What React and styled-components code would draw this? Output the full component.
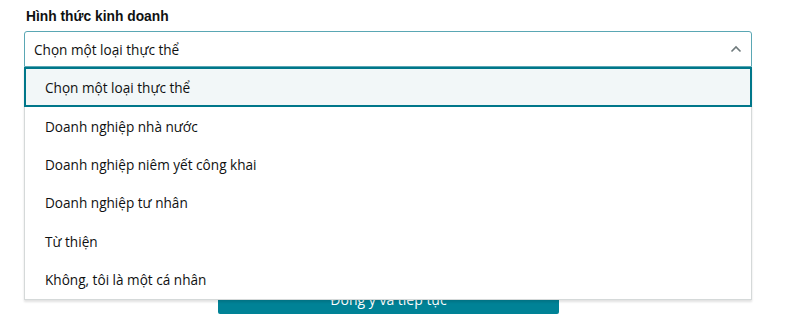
import React from "react";
import styled, { createGlobalStyle } from "styled-components";

const Global = createGlobalStyle`
  html, body { margin: 0; padding: 0; background: #fff; }
  body { font-family: "Open Sans", "Liberation Sans", Arial, sans-serif; color: #0f1111; }
`;

const Page = styled.div`
  width: 800px;
  height: 320px;
  overflow: hidden;
  padding: 7px 48px 0 24px;
  box-sizing: border-box;
  display: flex;
  flex-direction: column;
`;

const Label = styled.div`
  font-family: "Liberation Sans", Arial, sans-serif;
  font-size: 13.8px;
  font-weight: 700;
  line-height: 20px;
  padding-left: 2px;
  margin-bottom: 4px;
`;

const Field = styled.div`
  position: relative;
  width: 728px;
`;

const SelectBox = styled.div`
  height: 36px;
  box-sizing: border-box;
  border: 1px solid #5aa7b4;
  border-radius: 3px 3px 0 0;
  display: flex;
  align-items: center;
  justify-content: space-between;
  padding: 0 9px 0 9px;
  font-size: 13.6px;
  background: #fff;
`;

const Menu = styled.ul`
  position: absolute;
  left: 0;
  top: 36px;
  width: 728px;
  box-sizing: border-box;
  margin: 0;
  padding: 0;
  list-style: none;
  background: #fff;
  border: 1px solid #d5d9d9;
  border-top: none;
  box-shadow: 0 2px 2px rgba(15, 17, 17, 0.12);
  z-index: 2;
`;

const Item = styled.li`
  height: ${(p) => (p.$active ? "40px" : "38.4px")};
  box-sizing: border-box;
  display: flex;
  align-items: center;
  padding-left: ${(p) => (p.$active ? "19px" : "20px")};
  font-size: 13.6px;
  color: #0f1111;
  background: ${(p) => (p.$active ? "#f2f7f8" : "#fff")};
  border: ${(p) => (p.$active ? "2px solid #00778a" : "none")};
  margin: ${(p) => (p.$active ? "0 -1px" : "0")};
`;

const Button = styled.button`
  align-self: flex-start;
  margin: 217px 0 0 194px;
  width: 341px;
  height: 30px;
  border: none;
  border-radius: 2px;
  background: #008296;
  color: #fff;
  font-family: "Open Sans", "Liberation Sans", Arial, sans-serif;
  font-size: 14px;
  padding: 0;
`;

const options = [
  "Chọn một loại thực thể",
  "Doanh nghiệp nhà nước",
  "Doanh nghiệp niêm yết công khai",
  "Doanh nghiệp tư nhân",
  "Từ thiện",
  "Không, tôi là một cá nhân",
];

export default function App() {
  return (
    <>
      <Global />
      <Page>
        <Label>Hình thức kinh doanh</Label>
        <Field>
          <SelectBox>
            <span>Chọn một loại thực thể</span>
            <svg width="12" height="8" viewBox="0 0 12 8">
              <path d="M1.5 6.5 L6 2 L10.5 6.5" fill="none" stroke="#6f7a7c" strokeWidth="1.6" />
            </svg>
          </SelectBox>
          <Menu>
            {options.map((o, i) => (
              <Item key={o} $active={i === 0}>{o}</Item>
            ))}
          </Menu>
        </Field>
        <Button>Đồng ý và tiếp tục</Button>
      </Page>
    </>
  );
}
